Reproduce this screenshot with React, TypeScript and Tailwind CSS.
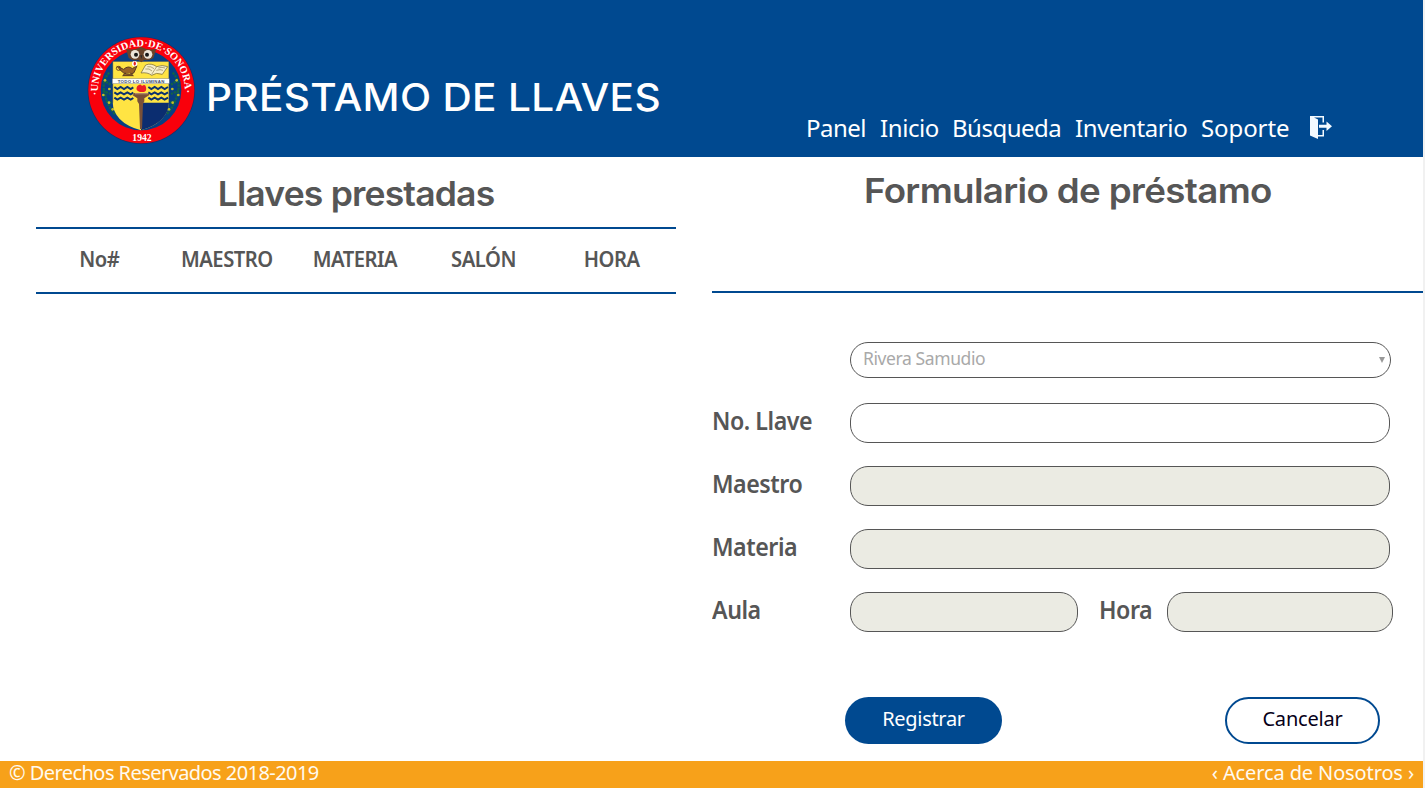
import React from "react";

function Seal() {
  return (
    <svg width="125" height="120" viewBox="0 0 375 360" className="block shrink-0">
      <defs>
        <path id="seal-top" d="M 55 195 A 130 130 0 1 1 313 195" />
      </defs>
      <circle cx="184" cy="181" r="161" fill="#202c62" />
      <circle cx="184" cy="181" r="159" fill="#f9000b" />
      <circle cx="183" cy="180" r="121" fill="#063f83" />
      <g fontFamily="'Liberation Serif', serif" fontWeight="700" fill="#fff">
        <text fontSize="31">
          <textPath href="#seal-top" textLength="434" lengthAdjust="spacing">·UNIVERSIDAD·DE·SONORA·</textPath>
        </text>
        <text x="186" y="332" fontSize="29" textAnchor="middle">1942</text>
      </g>
      <g fill="none" stroke="#146347" strokeWidth="7" strokeDasharray="7 3">
        <path d="M88 128Q62 155 76 195Q80 225 105 253" />
        <path d="M278 128Q305 155 291 195Q285 225 260 253" />
        <path d="M78 155l14 9M68 182l24 10M78 213l18 6M287 155l-14 9M297 182l-24 10M287 213l-18 6" />
      </g>
      <g fill="#c6be24">
        <circle cx="75" cy="151" r="4" /><circle cx="88" cy="177" r="4" /><circle cx="70" cy="195" r="4" /><circle cx="87" cy="218" r="4" /><circle cx="98" cy="238" r="4" />
        <circle cx="290" cy="151" r="4" /><circle cx="277" cy="177" r="4" /><circle cx="295" cy="195" r="4" /><circle cx="278" cy="218" r="4" /><circle cx="267" cy="238" r="4" />
      </g>
      <path d="M98 94H267V215Q265 277 183 301Q99 277 98 215Z" fill="#ffe443" />
      <path d="M183 218H267Q264 277 183 301Z" fill="#0b2d70" />
      <path d="M98 218V94H267V218" fill="none" stroke="#20366b" strokeWidth="2" />
      <path d="M138 56Q160 63 183 50Q205 63 229 56L220 84Q204 94 194 89L184 97L174 89Q160 94 146 84Z" fill="#68432a" />
      <circle cx="165" cy="73" r="13" fill="#eee5d8" /><circle cx="204" cy="73" r="13" fill="#eee5d8" />
      <circle cx="168" cy="74" r="6" fill="#171717" /><circle cx="201" cy="74" r="6" fill="#171717" />
      <path d="M181 76h6l-3 11z" fill="#282828" />
      <path d="M110 109L131 118Q145 105 157 116L171 107L162 128Q151 136 131 129L116 116M136 129l-8 8h32l-9-8" fill="#986326" stroke="#593b23" strokeWidth="3" />
      <ellipse cx="116" cy="115" rx="7" ry="6" fill="none" stroke="#694424" strokeWidth="3" />
      <circle cx="164" cy="101" r="8" fill="#fff" /><path d="M164 94q8 8 0 13q-7-5 0-13" fill="#e52520" />
      <path d="M197 105Q214 98 230 110Q247 103 263 110L247 133Q228 126 215 136Q203 126 183 129Z" fill="#f7efc9" stroke="#695d35" strokeWidth="2" />
      <path d="M230 110l-15 23M202 110q11-2 20 6M196 117q12-3 20 6M235 114q12-4 20 0M229 121q12-4 20 0" fill="none" stroke="#8c7e50" strokeWidth="2" />
      <rect x="97" y="146" width="171" height="15" fill="#fff" stroke="#45516d" />
      <text x="183" y="158" textAnchor="middle" textLength="140" fontFamily="'Liberation Sans', sans-serif" fontWeight="700" fontSize="13" fill="#344667">TODO LO ILUMINAN</text>
      <g fill="none" stroke="#0c326e" strokeWidth="6">
        <path d="M103 171l9 6 10-6 10 6 10-6 10 6 8-5M205 171l9 6 10-6 10 6 10-6 10 6 10-6" />
        <path d="M103 187l9 6 10-6 10 6 10-6 10 6 8-5M205 187l9 6 10-6 10 6 10-6 10 6 10-6" />
        <path d="M103 203l9 6 10-6 10 6 10-6 10 6 8-5M205 203l9 6 10-6 10 6 10-6 10 6 10-6" />
      </g>
      <path d="M172 168q10-9 14 0q10-7 12 4q3 12-7 14h-11q-16-5-8-18" fill="#ee1d23" />
      <path d="M163 189h44v7l-14 9v9l-4 8-3 75h-6l-3-75-5-8v-9l-14-9z" fill="#795038" />
      <path d="M165 191h39" stroke="#ab8565" strokeWidth="4" />
    </svg>
  );
}

function ExitIcon() {
  return (
    <svg width="24" height="26" viewBox="0 0 24 26" className="block shrink-0">
      <path d="M0 1h14v6.500h-1.500V2.500H4l4 2v15.500h4.500v-5H14v6.500H8v2.500L0 20.500z" fill="#f3faff" />
      <path d="M9 9.700h7.500V6.500l5.500 4.700-5.500 4.700v-3.200H9z" fill="#f3faff" />
    </svg>
  );
}

const field = "h-10 rounded-[18px] border border-[#565656] outline-none px-3";
const grey = "bg-[#ebebe3]";
const label = "shrink-0 whitespace-nowrap text-[25.5px] leading-[34px] font-semibold tracking-[-0.5px] text-[#565656]";
const squeeze = "inline-block origin-left scale-x-[0.91]";
const column = "inline-block scale-x-[0.94]";

export default function App() {
  return (
    <div className="flex h-[788px] w-[1425px] flex-col overflow-hidden bg-[#f1f1f1] pr-[2px] font-['Noto_Sans',sans-serif]">
      <header className="flex h-[157px] shrink-0 bg-[#004990] pl-20 text-white">
        <div className="flex w-[726px] shrink-0 pt-[30px]">
          <Seal />
          <h1 className="ml-px origin-left scale-x-[1.067] pt-[43px] whitespace-nowrap font-['Inter',sans-serif] text-[38px] leading-[48px] font-medium tracking-[0.3px]">PRÉSTAMO DE LLAVES</h1>
        </div>
        <nav className="flex pt-[110px] text-[24px] leading-[36px] whitespace-nowrap">
          <a className="w-[74px] tracking-[-0.5px]">Panel</a>
          <a className="w-[72px] tracking-[-0.4px]">Inicio</a>
          <a className="w-[123px] tracking-[-0.5px]">Búsqueda</a>
          <a className="w-[126px] tracking-[-0.4px]">Inventario</a>
          <a className="w-[109px] tracking-[-0.1px]">Soporte</a>
          <a className="pt-[5px]"><ExitIcon /></a>
        </nav>
      </header>

      <main className="flex min-h-0 flex-1 bg-white text-[#565656]">
        <section className="w-[676px] shrink-0 pl-9">
          <h2 className="flex h-[70px] scale-x-[1.045] items-center justify-center pt-[2px] font-['Inter',sans-serif] text-[34px] font-semibold tracking-[-0.8px] whitespace-nowrap">Llaves prestadas</h2>
          <div className="flex h-[67px] items-center border-y-2 border-[#004990] pb-[3px] text-center text-[21.5px] font-semibold tracking-[-0.5px]">
            <span className="w-[126px]"><span className={column}>No#</span></span>
            <span className="w-[129px]"><span className={column}>MAESTRO</span></span>
            <span className="w-[128px]"><span className={column}>MATERIA</span></span>
            <span className="w-[129px]"><span className={column}>SALÓN</span></span>
            <span className="w-[127px]"><span className={column}>HORA</span></span>
          </div>
        </section>

        <section className="ml-9 flex w-[711px] shrink-0 flex-col">
          <div className="flex h-[136px] shrink-0 justify-center border-b-2 border-[#004990] pt-[10px]">
            <h2 className="scale-x-[1.08] font-['Inter',sans-serif] text-[34px] leading-[48px] font-semibold tracking-[-0.6px] whitespace-nowrap">Formulario de préstamo</h2>
          </div>
          <form className="pt-[49px]">
            <div className="ml-[138px] flex h-9 w-[541px] items-center justify-between rounded-[18px] border border-[#565656] pr-[5px] pl-3 text-[#a9a9a9]">
              <span className="pb-[3px] text-[17.5px] tracking-[-0.4px]">Rivera Samudio</span>
              <svg width="6" height="6" viewBox="0 0 6 6"><path d="M0 0h6L3 6z" fill="#999" /></svg>
            </div>
            <div className="mt-[25px] flex flex-col gap-[23px]">
              <div className="flex">
                <label className={`${label} w-[138px]`}><span className={squeeze}>No. Llave</span></label>
                <input className={`${field} w-[540px]`} />
              </div>
              <div className="flex">
                <label className={`${label} w-[138px]`}><span className={squeeze}>Maestro</span></label>
                <input readOnly className={`${field} ${grey} w-[540px]`} />
              </div>
              <div className="flex">
                <label className={`${label} w-[138px]`}><span className={squeeze}>Materia</span></label>
                <input readOnly className={`${field} ${grey} w-[540px]`} />
              </div>
              <div className="flex">
                <label className={`${label} w-[138px]`}><span className={squeeze}>Aula</span></label>
                <input readOnly className={`${field} ${grey} w-[228px]`} />
                <label className={`${label} ml-[21px] w-[68px]`}><span className={squeeze}>Hora</span></label>
                <input readOnly className={`${field} ${grey} w-[226px]`} />
              </div>
            </div>
            <div className="mt-[65px] ml-[133px] flex w-[535px] justify-between text-[20px]">
              <button type="button" className="h-[47px] w-[157px] rounded-full bg-[#004990] pb-[3px] tracking-[-0.3px] text-white">Registrar</button>
              <button type="button" className="h-[47px] w-[155px] rounded-full border-2 border-[#004990] pb-[3px] tracking-[-0.2px] text-[#060018]">Cancelar</button>
            </div>
          </form>
        </section>
      </main>

      <footer className="flex h-[27px] shrink-0 items-center justify-between bg-[#f7a11a] pr-[9px] pb-[3px] pl-[9px] text-[20px] leading-[24px] whitespace-nowrap text-[#fffaf0]">
        <span className="tracking-[-0.56px]">© Derechos Reservados 2018-2019</span>
        <span className="tracking-[-0.12px]">‹ Acerca de Nosotros ›</span>
      </footer>
    </div>
  );
}
